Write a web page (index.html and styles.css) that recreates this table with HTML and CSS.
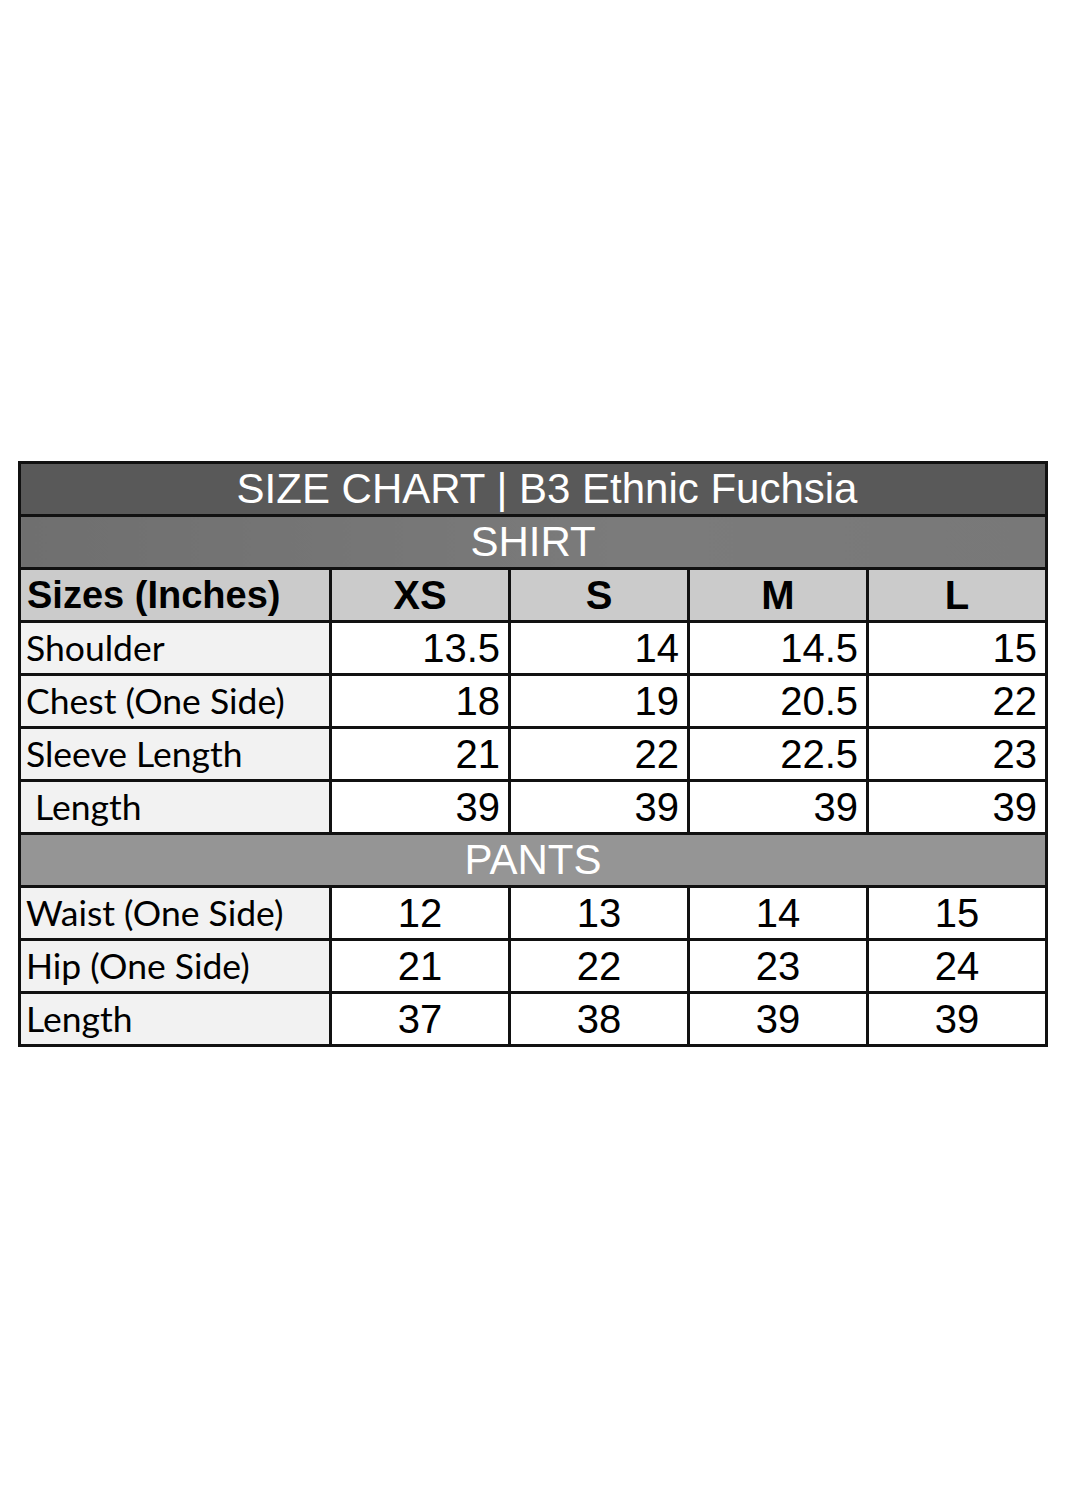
FILE: index.html
```html
<!DOCTYPE html>
<html>
<head>
<meta charset="utf-8">
<link rel="stylesheet" href="styles.css">
</head>
<body>
<div class="page">
<table class="chart">
  <colgroup>
    <col class="c-label"><col class="c-size"><col class="c-size"><col class="c-size"><col class="c-size">
  </colgroup>
  <tr class="title"><td colspan="5"><span class="title-text">SIZE CHART | B3 Ethnic Fuchsia</span></td></tr>
  <tr class="section shirt"><td colspan="5">SHIRT</td></tr>
  <tr class="head">
    <td class="label">Sizes (Inches)</td><td>XS</td><td>S</td><td>M</td><td>L</td>
  </tr>
  <tr class="num right"><td class="label">Shoulder</td><td>13.5</td><td>14</td><td>14.5</td><td>15</td></tr>
  <tr class="num right"><td class="label">Chest (One Side)</td><td>18</td><td>19</td><td>20.5</td><td>22</td></tr>
  <tr class="num right"><td class="label">Sleeve Length</td><td>21</td><td>22</td><td>22.5</td><td>23</td></tr>
  <tr class="num right"><td class="label indent">Length</td><td>39</td><td>39</td><td>39</td><td>39</td></tr>
  <tr class="section pants"><td colspan="5">PANTS</td></tr>
  <tr class="num center"><td class="label">Waist (One Side)</td><td>12</td><td>13</td><td>14</td><td>15</td></tr>
  <tr class="num center"><td class="label">Hip (One Side)</td><td>21</td><td>22</td><td>23</td><td>24</td></tr>
  <tr class="num center"><td class="label">Length</td><td>37</td><td>38</td><td>39</td><td>39</td></tr>
</table>
</div>
</body>
</html>
```
FILE: styles.css
```css
html, body {
  margin: 0;
  padding: 0;
  background: #ffffff;
}
.page {
  width: 1080px;
  height: 1503px;
  padding-top: 461px;
  padding-left: 18px;
  box-sizing: border-box;
}
.chart {
  border-collapse: collapse;
  table-layout: fixed;
  width: 1030px;
  font-family: "Liberation Sans", Arial, sans-serif;
  color: #000;
}
.c-label { width: 311px; }
.c-size { width: 179px; }
.chart td {
  border: 3px solid #111;
  height: 50px;
  padding: 0;
  line-height: 46px;
  white-space: nowrap;
  overflow: hidden;
}
.title td {
  background: #595959;
  color: #fff;
  font-size: 42px;
  text-align: center;
}
.title-text { padding-left: 28px; }
.section td {
  color: #fff;
  font-size: 42px;
  text-align: center;
}
.shirt td { background: linear-gradient(90deg, #6f6f6f, #7b7b7b 60%, #787878); }
.pants td { background: #959595; }
.head td {
  background: #cbcbcb;
  font-weight: bold;
  font-size: 40px;
  text-align: center;
}
.head td.label {
  text-align: left;
  padding-left: 6px;
  font-size: 38px;
}
.num td {
  background: #fff;
  font-size: 40px;
}
.right td { text-align: right; padding-right: 8px; }
.center td { text-align: center; }
.num td.label {
  background: #f2f2f2;
  font-family: Lato, "Open Sans", sans-serif;
  font-size: 35.5px;
  text-align: left;
  padding-left: 5px;
  padding-right: 0;
}
.num td.label.indent { padding-left: 14px; }
```
